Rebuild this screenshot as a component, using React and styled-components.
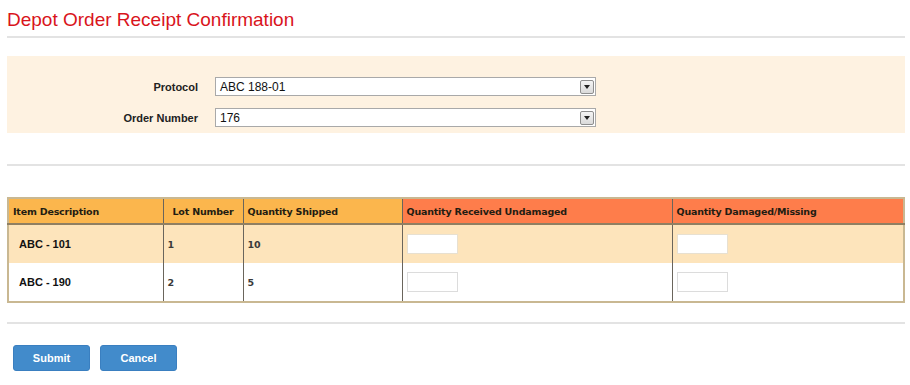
import React from 'react';
import styled, { createGlobalStyle } from 'styled-components';

const GlobalStyle = createGlobalStyle`
  html, body {
    margin: 0;
    padding: 0;
    background: #ffffff;
    font-family: "Liberation Sans", Arial, sans-serif;
  }
`;

const rows = [
  { item: 'ABC - 101', lot: '1', shipped: '10' },
  { item: 'ABC - 190', lot: '2', shipped: '5' },
];

const App = () => {
  return (
    <Page>
      <GlobalStyle />
      <Title>Depot Order Receipt Confirmation</Title>
      <Divider />

      <FilterPanel>
        <FieldRow>
          <FieldLabel>Protocol</FieldLabel>
          <Select>
            <span>ABC 188-01</span>
            <ArrowBox />
          </Select>
        </FieldRow>
        <FieldRow>
          <FieldLabel>Order Number</FieldLabel>
          <Select>
            <span>176</span>
            <ArrowBox />
          </Select>
        </FieldRow>
      </FilterPanel>

      <Divider $top={31} />

      <Table>
        <colgroup>
          <col style={{ width: 155 }} />
          <col style={{ width: 80 }} />
          <col style={{ width: 159 }} />
          <col style={{ width: 270 }} />
          <col />
        </colgroup>
        <thead>
          <tr>
            <Th>Item Description</Th>
            <Th $center>Lot Number</Th>
            <Th>Quantity Shipped</Th>
            <Th $hot>Quantity Received Undamaged</Th>
            <Th $hot>Quantity Damaged/Missing</Th>
          </tr>
        </thead>
        <tbody>
          {rows.map((r, i) => (
            <Tr key={r.item} $odd={i === 0}>
              <ItemCell>{r.item}</ItemCell>
              <Td>{r.lot}</Td>
              <Td>{r.shipped}</Td>
              <Td><QtyInput $active={i === 0} /></Td>
              <Td><QtyInput $active={i === 0} /></Td>
            </Tr>
          ))}
        </tbody>
      </Table>

      <Divider $top={19} />

      <Actions>
        <Button>Submit</Button>
        <Button>Cancel</Button>
      </Actions>
    </Page>
  );
};

const Page = styled.div`
  width: 898px;
  padding: 9px 5px 0 7px;
`;

const Title = styled.h1`
  margin: 0;
  font-family: "Liberation Sans", Arial, sans-serif;
  font-size: 19px;
  font-weight: normal;
  line-height: 21px;
  color: #d9141c;
`;

const Divider = styled.div`
  height: 2px;
  background: #e3e3e3;
  margin-top: ${(p) => (p.$top ? p.$top : 6)}px;
`;

const FilterPanel = styled.div`
  margin-top: 18px;
  height: 77px;
  background: #fef2e1;
  box-sizing: border-box;
  padding-top: 21px;
  display: flex;
  flex-direction: column;
  gap: 12px;
`;

const FieldRow = styled.div`
  display: flex;
  align-items: center;
  gap: 17px;
`;

const FieldLabel = styled.label`
  width: 191px;
  text-align: right;
  font-size: 11px;
  font-weight: bold;
  color: #222;
`;

const Select = styled.div`
  width: 381px;
  height: 19px;
  box-sizing: border-box;
  border: 1px solid #a9a9a9;
  background: #ffffff;
  display: flex;
  align-items: center;
  justify-content: space-between;
  padding: 0 1px 0 4px;
  font-size: 12px;
  color: #111;
`;

const ArrowBox = styled.span`
  width: 14px;
  height: 14px;
  box-sizing: border-box;
  border: 1px solid #8e8e8e;
  border-radius: 2px;
  background: linear-gradient(#f4f4f4, #dadada);
  position: relative;

  &::after {
    content: "";
    position: absolute;
    left: 3px;
    top: 4px;
    border-left: 3px solid transparent;
    border-right: 3px solid transparent;
    border-top: 4px solid #222;
  }
`;

const Table = styled.table`
  margin-top: 31px;
  width: 100%;
  border-collapse: collapse;
  table-layout: fixed;
  border: 2px solid #c9b892;
  font-family: "DejaVu Sans", Verdana, sans-serif;
`;

const Th = styled.th`
  height: 24px;
  padding: 0 4px;
  text-align: ${(p) => (p.$center ? 'center' : 'left')};
  font-size: 9.5px;
  font-weight: bold;
  letter-spacing: -0.2px;
  color: #231c12;
  background: ${(p) => (p.$hot ? '#fe7d4b' : '#fbb64d')};
  border-left: 1px solid #6a655c;
  border-bottom: 2px solid #8f7f62;

  &:first-child {
    border-left: none;
  }
`;

const Tr = styled.tr`
  background: ${(p) => (p.$odd ? '#fde4bb' : '#ffffff')};

  & + & td {
    border-top: 2px solid #8f8578;
  }
`;

const Td = styled.td`
  height: 38px;
  padding: 0 4px;
  font-size: 9.5px;
  font-weight: bold;
  color: #3a3a3a;
  border-left: 1px solid #6a655c;
`;

const ItemCell = styled.td`
  height: 38px;
  padding: 0 0 0 10px;
  font-family: "Liberation Sans", Arial, sans-serif;
  font-size: 11px;
  font-weight: bold;
  color: #111;
`;

const QtyInput = styled.div`
  width: 51px;
  height: 20px;
  box-sizing: border-box;
  background: #ffffff;
  border: 1px solid ${(p) => (p.$active ? '#e8e0d0' : '#dcdcdc')};
`;

const Actions = styled.div`
  margin-top: 21px;
  padding-left: 6px;
  display: flex;
  gap: 10px;
`;

const Button = styled.button`
  width: 77px;
  height: 26px;
  border: 1px solid #3a7fc0;
  border-radius: 3px;
  background: #428bcb;
  color: #ffffff;
  font-family: "Liberation Sans", Arial, sans-serif;
  font-size: 11px;
  font-weight: bold;
  padding: 0;
`;

export default App;
